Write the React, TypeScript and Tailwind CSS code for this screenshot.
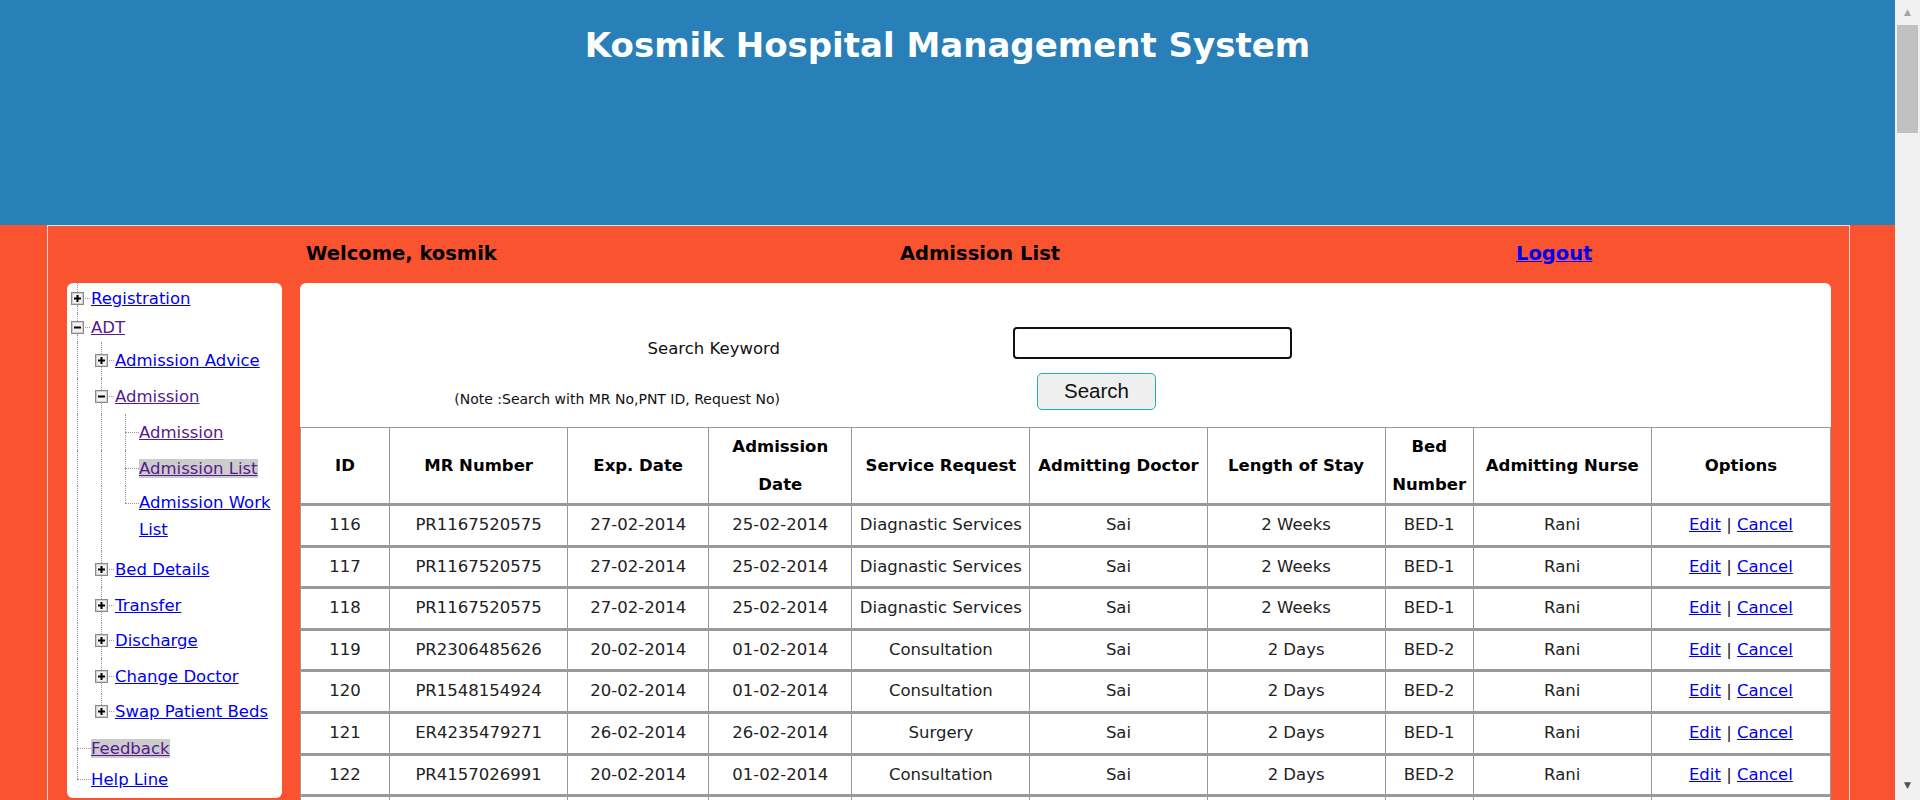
import React from "react";
import clsx from "clsx";

type Row = {
  id: number;
  mr: string;
  exp: string;
  adm: string;
  service: string;
  doctor: string;
  stay: string;
  bed: string;
  nurse: string;
};

const rows: Row[] = [
  { id: 116, mr: "PR1167520575", exp: "27-02-2014", adm: "25-02-2014", service: "Diagnastic Services", doctor: "Sai", stay: "2 Weeks", bed: "BED-1", nurse: "Rani" },
  { id: 117, mr: "PR1167520575", exp: "27-02-2014", adm: "25-02-2014", service: "Diagnastic Services", doctor: "Sai", stay: "2 Weeks", bed: "BED-1", nurse: "Rani" },
  { id: 118, mr: "PR1167520575", exp: "27-02-2014", adm: "25-02-2014", service: "Diagnastic Services", doctor: "Sai", stay: "2 Weeks", bed: "BED-1", nurse: "Rani" },
  { id: 119, mr: "PR2306485626", exp: "20-02-2014", adm: "01-02-2014", service: "Consultation", doctor: "Sai", stay: "2 Days", bed: "BED-2", nurse: "Rani" },
  { id: 120, mr: "PR1548154924", exp: "20-02-2014", adm: "01-02-2014", service: "Consultation", doctor: "Sai", stay: "2 Days", bed: "BED-2", nurse: "Rani" },
  { id: 121, mr: "ER4235479271", exp: "26-02-2014", adm: "26-02-2014", service: "Surgery", doctor: "Sai", stay: "2 Days", bed: "BED-1", nurse: "Rani" },
  { id: 122, mr: "PR4157026991", exp: "20-02-2014", adm: "01-02-2014", service: "Consultation", doctor: "Sai", stay: "2 Days", bed: "BED-2", nurse: "Rani" },
  { id: 123, mr: "PR4157026991", exp: "20-02-2014", adm: "01-02-2014", service: "Consultation", doctor: "Sai", stay: "2 Days", bed: "BED-2", nurse: "Rani" },
];

type Node = {
  label: string;
  anc: number; // ancestor levels drawn as a straight line
  above: boolean;
  below: boolean;
  box?: "plus" | "minus";
  h: string;
  top?: string;
  visited?: boolean;
  selected?: boolean;
  wrap?: boolean;
};

const tree: Node[] = [
  { label: "Registration", anc: 0, above: true, below: true, box: "plus", h: "h-[30px]" },
  { label: "ADT", anc: 0, above: true, below: true, box: "minus", h: "h-[29px]", visited: true },
  { label: "Admission Advice", anc: 1, above: true, below: true, box: "plus", h: "h-[36px]" },
  { label: "Admission", anc: 1, above: true, below: true, box: "minus", h: "h-[36px]", visited: true },
  { label: "Admission", anc: 2, above: true, below: true, h: "h-[36px]", visited: true },
  { label: "Admission List", anc: 2, above: true, below: true, h: "h-[36px]", visited: true, selected: true },
  { label: "Admission Work List", anc: 2, above: true, below: false, h: "h-[65px]", top: "h-[17px]", wrap: true },
  { label: "Bed Details", anc: 1, above: true, below: true, box: "plus", h: "h-[36px]" },
  { label: "Transfer", anc: 1, above: true, below: true, box: "plus", h: "h-[36px]" },
  { label: "Discharge", anc: 1, above: true, below: true, box: "plus", h: "h-[35px]" },
  { label: "Change Doctor", anc: 1, above: true, below: true, box: "plus", h: "h-[36px]" },
  { label: "Swap Patient Beds", anc: 1, above: true, below: false, box: "plus", h: "h-[35px]" },
  { label: "Feedback", anc: 0, above: true, below: true, h: "h-[38px]", visited: true, selected: true },
  { label: "Help Line", anc: 0, above: true, below: false, h: "h-[24px]" },
];

function BoxIcon({ kind }: { kind: "plus" | "minus" }) {
  return (
    <svg width="13" height="13" viewBox="0 0 13 13" className="ml-[4px] shrink-0">
      <rect x="0.5" y="0.5" width="12" height="12" fill="#ffffff" stroke="#8a8a8a" />
      <rect x="1.5" y="1.5" width="10" height="10" fill="#f2f2f2" stroke="#cfcfcf" />
      <path d="M3 6.5h7" stroke="#000" strokeWidth="2" />
      {kind === "plus" && <path d="M6.5 3v7" stroke="#000" strokeWidth="2" />}
    </svg>
  );
}

function Gutter({ node }: { node: Node }) {
  return (
    <div className="flex w-[24px] shrink-0 flex-col self-stretch">
      <div className={clsx(node.top ?? "flex-1", "ml-[10px]", node.above && "border-l border-dotted border-[#999999]")} />
      {node.box ? (
        <div className="flex h-[13px] items-center">
          <BoxIcon kind={node.box} />
          <div className="ml-[1px] mr-[1px] h-[1px] flex-1 border-t border-dotted border-[#999999]" />
        </div>
      ) : (
        <div className="ml-[10px] h-[1px] border-t border-dotted border-[#999999]" />
      )}
      <div className={clsx("flex-1 ml-[10px]", node.below && "border-l border-dotted border-[#999999]")} />
    </div>
  );
}

function TreeRow({ node }: { node: Node }) {
  return (
    <div className={clsx("flex", node.h)}>
      {Array.from({ length: node.anc }, (_, i) => (
        <div key={i} className="w-[24px] shrink-0 self-stretch">
          <div className="ml-[10px] h-full border-l border-dotted border-[#999999]" />
        </div>
      ))}
      <Gutter node={node} />
      <div className={clsx("flex pr-[4px]", node.wrap ? "items-start pt-[3px] leading-[27px]" : "items-center leading-[19px]")}>
        <a
          href="#"
          className={clsx(
            "underline",
            node.visited ? "text-[#551a8b]" : "text-[#0000ee]",
            node.selected && "bg-[#cccccc]"
          )}
        >
          {node.label}
        </a>
      </div>
    </div>
  );
}

function Scrollbar() {
  return (
    <div className="flex h-[800px] w-[25px] shrink-0 flex-col bg-[#f1f1f1]">
      <div className="flex h-[25px] items-center justify-center text-[9px] leading-none text-[#a3a3a3]">▲</div>
      <div className="mx-[2px] h-[108px] bg-[#c1c1c1]" />
      <div className="flex-1" />
      <div className="flex h-[30px] items-center justify-center text-[9px] leading-none text-[#505050]">▼</div>
    </div>
  );
}

const cols = ["w-[89px]", "w-[178px]", "w-[141px]", "w-[143px]", "w-[178px]", "w-[177px]", "w-[178px]", "w-[88px]", "w-[178px]", "w-[179px]"];

export default function App() {
  return (
    <div className="flex h-[800px] overflow-hidden font-['DejaVu_Sans',sans-serif] text-[16.5px]">
      <div className="h-[800px] w-[1895px] shrink-0 overflow-hidden bg-[#fa5330]">
        <header className="h-[225px] bg-[#2980b9] pt-[20px] text-center">
          <h1 className="text-[34px] font-bold leading-normal text-white">Kosmik Hospital Management System</h1>
        </header>

        <div className="ml-[47px] w-[1803px] border-x border-t border-[#dddddd] pb-[40px]">
          <div className="flex h-[57px] items-start pl-[258px] pt-[17px] text-[19.5px] font-bold leading-[22px] text-black">
            <div className="w-[594px]">Welcome, kosmik</div>
            <div className="w-[616px]">Admission List</div>
            <a href="#" className="text-[#0000ee] underline">
              Logout
            </a>
          </div>

          <div className="flex items-start gap-[18px] pl-[19px]">
            <nav className="w-[215px] shrink-0 rounded-[6px] bg-white pb-[7px]">
              {tree.map((n, i) => (
                <TreeRow key={i} node={n} />
              ))}
            </nav>

            <main className="w-[1531px] rounded-[6px] bg-white">
              <div className="grid grid-cols-[480px_1fr] gap-x-[233px] gap-y-[14px] pb-[17px] pt-[44px]">
                <div className="h-[32px] pt-[12px] text-right leading-[19px] text-[#111]">Search Keyword</div>
                <div>
                  <input
                    type="text"
                    className="block h-[32px] w-[279px] rounded-[4px] border-2 border-[#111] bg-white px-2 outline-none"
                  />
                </div>
                <div className="h-[37px] pt-[18px] text-right text-[14px] leading-[17px] text-[#111]">
                  (Note :Search with MR No,PNT ID, Request No)
                </div>
                <div>
                  <button className="ml-[24px] block h-[37px] w-[119px] rounded-[5px] border border-[#20b2aa] bg-[#efefef] font-['Liberation_Sans',Arial,sans-serif] text-[20.5px] text-[#111]">
                    Search
                  </button>
                </div>
              </div>

              <table className="w-[1531px] table-fixed border-collapse border border-[#999999] text-center">
                <colgroup>
                  {cols.map((c, i) => (
                    <col key={i} className={c} />
                  ))}
                </colgroup>
                <thead>
                  <tr className="border-b-[3px] border-[#999999] font-bold text-black">
                    <th className="border-x border-[#999999] leading-[37.5px]">ID</th>
                    <th className="border-x border-[#999999] leading-[37.5px]">MR Number</th>
                    <th className="border-x border-[#999999] leading-[37.5px]">Exp. Date</th>
                    <th className="border-x border-[#999999] leading-[37.5px]">
                      Admission
                      <br />
                      Date
                    </th>
                    <th className="border-x border-[#999999] leading-[37.5px]">Service Request</th>
                    <th className="border-x border-[#999999] leading-[37.5px]">Admitting Doctor</th>
                    <th className="border-x border-[#999999] leading-[37.5px]">Length of Stay</th>
                    <th className="border-x border-[#999999] leading-[37.5px]">
                      Bed
                      <br />
                      Number
                    </th>
                    <th className="border-x border-[#999999] leading-[37.5px]">Admitting Nurse</th>
                    <th className="border-x border-[#999999] leading-[37.5px]">Options</th>
                  </tr>
                </thead>
                <tbody className="text-[#222]">
                  {rows.map((r) => (
                    <tr key={r.id} className="border-b-[3px] border-[#999999]">
                      <td className="border-x border-[#999999] leading-[38.6px]">{r.id}</td>
                      <td className="border-x border-[#999999] leading-[38.6px]">{r.mr}</td>
                      <td className="border-x border-[#999999] leading-[38.6px]">{r.exp}</td>
                      <td className="border-x border-[#999999] leading-[38.6px]">{r.adm}</td>
                      <td className="border-x border-[#999999] leading-[38.6px]">{r.service}</td>
                      <td className="border-x border-[#999999] leading-[38.6px]">{r.doctor}</td>
                      <td className="border-x border-[#999999] leading-[38.6px]">{r.stay}</td>
                      <td className="border-x border-[#999999] leading-[38.6px]">{r.bed}</td>
                      <td className="border-x border-[#999999] leading-[38.6px]">{r.nurse}</td>
                      <td className="border-x border-[#999999] leading-[38.6px]">
                        <a href="#" className="text-[#0000ee] underline">
                          Edit
                        </a>{" "}
                        |{" "}
                        <a href="#" className="text-[#0000ee] underline">
                          Cancel
                        </a>
                      </td>
                    </tr>
                  ))}
                </tbody>
              </table>
            </main>
          </div>
        </div>
      </div>
      <Scrollbar />
    </div>
  );
}
